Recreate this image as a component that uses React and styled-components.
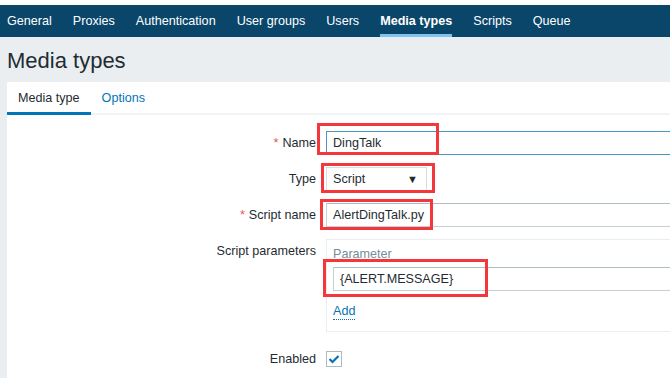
import React from "react";
import styled, { createGlobalStyle } from "styled-components";

const GlobalStyle = createGlobalStyle`
  body {
    margin: 0;
    background: #ebeef0;
    font-family: "Liberation Sans", Arial, sans-serif;
    font-size: 12.6px;
    color: #1f2c33;
    overflow: hidden;
  }
`;

const Page = styled.div`
  width: 670px;
  min-height: 378px;
  overflow: hidden;
  background: #ebeef0;
  border-top: 5px solid #ffffff;
  box-sizing: border-box;
  display: flex;
  flex-direction: column;
`;

const Nav = styled.nav`
  position: relative;
  flex-shrink: 0;
  height: 32px;
  background: #0a466a;
  display: flex;
  gap: 21px;
  padding-left: 7px;

  /* little tab on top of the bar */
  &::before {
    content: "";
    position: absolute;
    left: 520px;
    top: -4px;
    width: 16px;
    height: 5px;
    background: #0a466a;
    border-radius: 6px 6px 0 0;
  }
`;

const NavItem = styled.a`
  display: flex;
  align-items: center;
  height: 32px;
  color: #ffffff;
  font-weight: ${(p) => (p.active ? "bold" : "normal")};
  box-shadow: ${(p) => (p.active ? "inset 0 -3px 0 #7fc4f0" : "none")};
  text-decoration: none;
  white-space: nowrap;
`;

const Header = styled.header`
  flex-shrink: 0;
  height: 45px;
  padding: 2px 7px 0;
  box-sizing: border-box;
  display: flex;
  align-items: center;
`;

const Title = styled.h1`
  margin: 0;
  font-size: 22px;
  font-weight: normal;
  color: #1f2c33;
`;

const Card = styled.section`
  flex: 1;
  margin-left: 7px;
  width: 720px;
  background: #ffffff;
`;

const TabBar = styled.div`
  display: flex;
  height: 33px;
  border-bottom: 2px solid #f1f3f4;
  box-sizing: border-box;
`;

const Tab = styled.a`
  height: 33px;
  box-sizing: border-box;
  margin-bottom: -2px;
  padding: 2px 11px 0;
  display: flex;
  align-items: center;
  color: ${(p) => (p.active ? "#1f2c33" : "#0275b8")};
  border-bottom: 3px solid ${(p) => (p.active ? "#0275b8" : "transparent")};
  text-decoration: none;
`;

const Form = styled.div`
  padding-top: 16px;
`;

const Row = styled.div`
  display: grid;
  grid-template-columns: 309px 1fr;
  column-gap: 10px;
  padding-top: ${(p) => p.top || 0}px;
  margin-bottom: 12px;
`;

const Label = styled.label`
  text-align: right;
  line-height: 24px;
  white-space: nowrap;
`;

const Required = styled.span`
  color: #e45959;
  margin-right: 4px;
`;

const Field = styled.div`
  position: relative;
  width: ${(p) => p.width || 453}px;
  height: 24px;
`;

const Highlight = styled.span`
  position: absolute;
  left: ${(p) => p.x}px;
  top: ${(p) => p.y}px;
  width: ${(p) => p.w}px;
  height: ${(p) => p.h}px;
  border: 3px solid #f4373b;
  box-sizing: border-box;
  pointer-events: none;
`;

const TextInput = styled.input`
  width: 100%;
  height: 24px;
  box-sizing: border-box;
  margin: 0;
  padding: 0 6px;
  font: inherit;
  color: #1f2c33;
  background: #ffffff;
  border: 1px solid ${(p) => (p.focused ? "#4796c4" : "#c5cfd4")};
  border-top-color: ${(p) => (p.focused ? "#4796c4" : "#aebcc3")};
  outline: none;
`;

const Select = styled.div`
  width: 100%;
  height: 24px;
  box-sizing: border-box;
  border: 1px solid #d8dde0;
  padding: 0 6px;
  display: flex;
  align-items: center;
  justify-content: space-between;
  background: #ffffff;
`;

const Caret = styled.span`
  font-size: 11px;
  margin-right: 2px;
  color: #1f2c33;
`;

const ParamBox = styled.div`
  width: 600px;
  border: 1px solid #ebeef0;
  padding: 5px 6px 11px;
`;

const ParamHead = styled.div`
  line-height: 18px;
  color: #768d99;
  margin-bottom: 4px;
`;

const AddLink = styled.a`
  display: inline-block;
  margin-top: 12px;
  line-height: 16px;
  color: #0275b8;
  border-bottom: 1px dotted #0275b8;
  text-decoration: none;
`;

const Check = styled.span`
  margin-top: 4px;
  width: 16px;
  height: 16px;
  box-sizing: border-box;
  border: 1px solid #acbbc2;
  display: flex;
  align-items: center;
  justify-content: center;
  background: #ffffff;
`;

const navItems = [
  "General",
  "Proxies",
  "Authentication",
  "User groups",
  "Users",
  "Media types",
  "Scripts",
  "Queue",
];

export default function App() {
  return (
    <>
      <GlobalStyle />
      <Page>
        <Nav>
          {navItems.map((item) => (
            <NavItem key={item} active={item === "Media types"}>
              {item}
            </NavItem>
          ))}
        </Nav>
        <Header>
          <Title>Media types</Title>
        </Header>
        <Card>
          <TabBar>
            <Tab active>Media type</Tab>
            <Tab>Options</Tab>
          </TabBar>
          <Form>
            <Row>
              <Label>
                <Required>*</Required>Name
              </Label>
              <Field>
                <TextInput focused defaultValue="DingTalk" />
                <Highlight x={-9} y={-8} w={122} h={32} />
              </Field>
            </Row>
            <Row>
              <Label>Type</Label>
              <Field width={101}>
                <Select>
                  <span>Script</span>
                  <Caret>▼</Caret>
                </Select>
                <Highlight x={-5} y={-4} w={114} h={30} />
              </Field>
            </Row>
            <Row>
              <Label>
                <Required>*</Required>Script name
              </Label>
              <Field>
                <TextInput defaultValue="AlertDingTalk.py" />
                <Highlight x={-6} y={-4} w={113} h={31} />
              </Field>
            </Row>
            <Row>
              <Label>Script parameters</Label>
              <ParamBox>
                <ParamHead>Parameter</ParamHead>
                <Field>
                  <TextInput defaultValue="{ALERT.MESSAGE}" />
                  <Highlight x={-10} y={-8} w={165} h={38} />
                </Field>
                <AddLink>Add</AddLink>
              </ParamBox>
            </Row>
            <Row top={3}>
              <Label>Enabled</Label>
              <Check>
                <svg width="12" height="10" viewBox="0 0 12 10">
                  <path
                    d="M1.5 5 L4.5 8 L10.5 2"
                    fill="none"
                    stroke="#0275b8"
                    strokeWidth="2.2"
                  />
                </svg>
              </Check>
            </Row>
          </Form>
        </Card>
      </Page>
    </>
  );
}
